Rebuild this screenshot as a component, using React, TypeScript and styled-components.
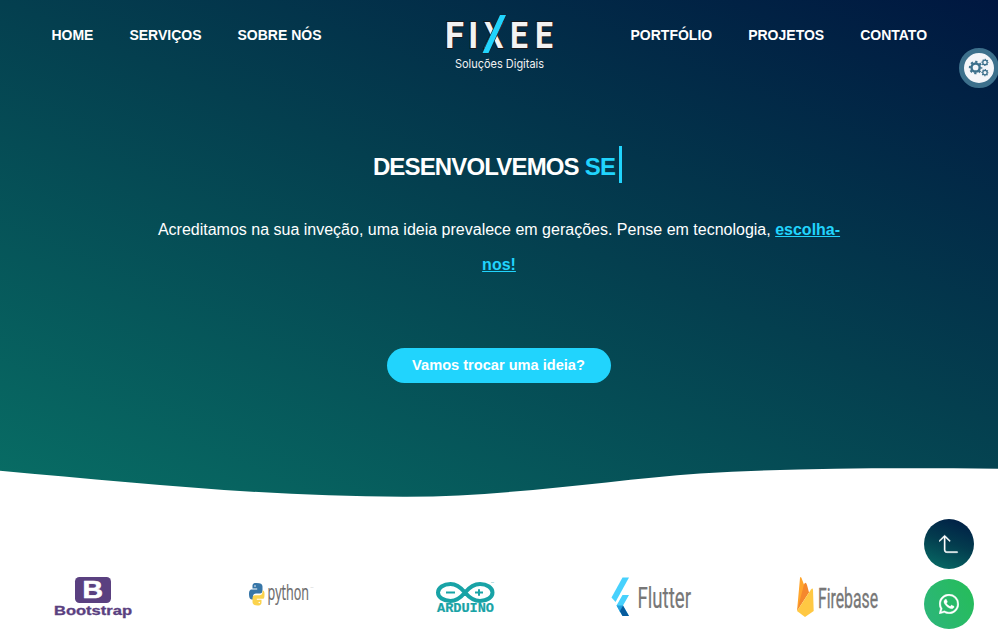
import React from "react";
import styled, { createGlobalStyle } from "styled-components";
import { BsArrow90DegUp, BsWhatsapp } from "react-icons/bs";

const GlobalStyle = createGlobalStyle`
  * { box-sizing: border-box; }
  html, body { margin: 0; background: #fff; overflow: hidden; }
  body { font-family: "Liberation Sans", Arial, sans-serif; }
  a { color: inherit; text-decoration: none; }
`;

const Page = styled.div`
  height: 642px;
  overflow: hidden;
`;

const Hero = styled.section`
  display: flex;
  flex-direction: column;
  align-items: center;
  position: relative;
  height: 498px;
  color: #fff;
  background: linear-gradient(203deg, #001740, #043f4f 46%, #086e65);
`;

const Header = styled.header`
  display: grid;
  grid-template-columns: 396px 1fr 396px;
  align-items: start;
  width: 100%;
  height: 80px;
  padding: 0 0 0 51px;
`;

const Nav = styled.nav<{ $right?: boolean }>`
  display: flex;
  gap: 36px;
  padding-top: 27px;
  padding-left: ${(p) => (p.$right ? "28.5px" : "0.4px")};
  font-size: 14px;
  font-weight: 700;
  line-height: 16px;
  white-space: nowrap;
`;

const Logo = styled.svg`
  display: block;
  width: 120px;
  height: 66px;
  margin: 10px 0 0 -7px;
`;

const Title = styled.h1`
  display: flex;
  gap: 6px;
  height: 37px;
  margin: 66px 0 0 -3px;
  font-size: 24px;
  line-height: 37px;
  letter-spacing: -0.85px;
`;

const TitleText = styled.span`
  padding-top: 2px;
`;

const Typed = styled.span`
  height: 37px;
  padding-top: 2px;
  padding-right: 4px;
  border-right: 3px solid #21d4fd;
  color: #21d4fd;
`;

const Lead = styled.p`
  width: 700px;
  margin: 29px 0 0;
  font-size: 16px;
  line-height: 35px;
  text-align: center;
`;

const Highlight = styled.a`
  && {
    color: #21d4fd;
    font-weight: 700;
    text-decoration: underline;
  }
`;

const CallButton = styled.button`
  width: 224px;
  height: 35px;
  margin: 66px 1px 0 0;
  padding: 0;
  border: 0;
  border-radius: 20px;
  background: #21d4fd;
  color: #fff;
  font: 700 14.6px/35px "Liberation Sans", Arial, sans-serif;
`;

const Wave = styled.svg`
  position: absolute;
  left: 0;
  bottom: 0;
  width: 998px;
  height: 32px;
`;

const Partners = styled.section`
  display: grid;
  grid-template-columns: repeat(5, 186px);
  padding-top: 72px;
`;

const Partner = styled.svg`
  display: block;
  width: 186px;
  height: 60px;
`;

const Floating = styled.aside`
  position: fixed;
  right: 24px;
  bottom: 13px;
  display: grid;
  gap: 10px;
`;

const RoundButton = styled.a<{ $fill: string }>`
  display: grid;
  place-items: center;
  width: 50px;
  height: 50px;
  border-radius: 50%;
  background: ${(p) => p.$fill};
  && { color: #fff; }
  font-size: 20px;

  svg {
    stroke: currentColor;
    stroke-width: 0.3px;
  }
`;

const Settings = styled.button`
  position: fixed;
  top: 48px;
  right: -1px;
  display: grid;
  place-items: center;
  width: 40px;
  height: 40px;
  padding: 0;
  border: 5px solid #3d708c;
  border-radius: 50%;
  background: #f4f5f9;
`;

const Gear = ({ x, y, r }: { x: number; y: number; r: number }) => {
  const tooth = (2 * Math.PI * (r + r * 0.4)) / 16;
  return (
    <g fill="none" stroke="#3d708c">
      <circle cx={x} cy={y} r={r} strokeWidth={r * 0.6} />
      <circle cx={x} cy={y} r={r * 1.4} strokeWidth={r * 0.5} strokeDasharray={`${tooth} ${tooth}`} strokeDashoffset={tooth / 2} />
    </g>
  );
};

const Gears = () => (
  <svg width="30" height="30" viewBox="964 53 30 30">
    <Gear x={975.6} y={67.5} r={4.1} />
    <Gear x={985} y={62.4} r={2.2} />
    <Gear x={985} y={72.6} r={2.2} />
  </svg>
);

const FixeeLogo = () => (
  <Logo viewBox="440 10 120 66">
    <g fill="#f2f2f2" stroke="#17181c" strokeWidth="2" paintOrder="stroke" fontFamily="Roboto" fontWeight="700" fontSize="37.500">
      <text x="445" y="47.500" textLength="19" lengthAdjust="spacingAndGlyphs">F</text>
      <text x="468.200" y="47.500" textLength="10" lengthAdjust="spacingAndGlyphs">I</text>
      <text x="484" y="47.500" textLength="19.500" lengthAdjust="spacingAndGlyphs">X</text>
      <text x="510" y="47.500" textLength="18" lengthAdjust="spacingAndGlyphs">E</text>
      <text x="535" y="47.500" textLength="18" lengthAdjust="spacingAndGlyphs">E</text>
    </g>
    <path d="M500 15h6L488.500 53H482.500Z" fill="#21d4fd" stroke="#10212e" strokeWidth="1.2" paintOrder="stroke" />
    <text x="455" y="68" textLength="89" lengthAdjust="spacingAndGlyphs" fill="#f2f2f2" fontFamily="Inter" fontSize="12">Soluções Digitais</text>
  </Logo>
);

const BootstrapLogo = () => (
  <Partner viewBox="0 570 186 60">
    <rect x="75" y="577" width="36" height="26" rx="4.5" fill="#5a4080" />
    <text x="82.500" y="598.300" textLength="20.500" lengthAdjust="spacingAndGlyphs" fill="#fff" stroke="#fff" strokeWidth=".6" fontFamily="Liberation Sans" fontWeight="700" fontSize="24">B</text>
    <text x="54" y="614.500" textLength="78" lengthAdjust="spacingAndGlyphs" fill="#5a4080" stroke="#5a4080" strokeWidth=".3" fontFamily="Liberation Sans" fontWeight="700" fontSize="12">Bootstrap</text>
  </Partner>
);

const PythonLogo = () => (
  <Partner viewBox="186 570 186 60">
    <path d="M256.500 583c-4 0-4 1.600-4 3.600v2h4.700v1h-5.500c-2.300 0-2.700 2.500-2.700 5s.8 5 2.700 5h1.300v-3c0-2 1.300-3.200 3-3.200h4c1.500 0 2.500-1.300 2.500-3V586.600c0-2.600-2-3.600-6-3.600Z" fill="#3776a8" />
    <path d="M257.500 605.500c4 0 4-1.700 4-3.700v-2h-4.700v-1h6c1.700 0 1.700-2.400 1.700-4.800s-.5-3.600-1.700-3.600H262.500v1.500c0 2-1.300 3.300-3 3.300h-4.500c-1.700 0-2.500 1.300-2.500 3v3.800c0 2.500 2 3.500 5 3.500Z" fill="#fbd34d" />
    <circle cx="255" cy="586" r=".8" fill="#fff" />
    <circle cx="259.300" cy="602.500" r=".8" fill="#fff" />
    <text x="267.500" y="600" textLength="41.500" lengthAdjust="spacingAndGlyphs" fill="#6a6a6a" stroke="#6a6a6a" strokeWidth=".2" fontFamily="Open Sans" fontSize="21">python</text>
    <text x="310.500" y="588" fill="#bbb" fontFamily="Liberation Sans" fontSize="2">TM</text>
  </Partner>
);

const ArduinoLogo = () => (
  <Partner viewBox="372 570 186 60">
    <g fill="none" stroke="#18a3a6">
      <path d="M465 592.500C460 586.500 456 584 450.500 584c-7 0-12.500 3.800-12.500 8.500s5.500 8.500 12.500 8.500c5.500 0 9.500-2.500 14.500-8.500s9.500-8.500 15-8.500c7 0 12.500 3.800 12.500 8.500s-5.500 8.500-12.500 8.500c-5.500 0-10-2.500-15-8.500Z" strokeWidth="4" />
      <path d="M446 592.500h9M475 592.500h8M479 589.200v6.600" strokeWidth="2" />
    </g>
    <text x="437" y="612" textLength="57" lengthAdjust="spacingAndGlyphs" fill="#18a3a6" stroke="#18a3a6" strokeWidth=".2" fontFamily="Liberation Mono" fontWeight="700" fontSize="12">ARDUINO</text>
    <text x="491" y="583" fill="#18a3a6" fontFamily="Liberation Sans" fontSize="2">TM</text>
  </Partner>
);

const FlutterLogo = () => (
  <Partner viewBox="558 570 186 60">
    <path d="M622.500 577.500H629L615.500 602L611.500 597.500Z" fill="#47d1fd" />
    <path d="M622.500 595H629L623 605.500L629 616H622.500L616.500 605.500Z" fill="#47d1fd" />
    <path d="M616.500 605.500L620 612L623 605.500Z" fill="#259fdc" />
    <path d="M623 605.500L629 616H622.500L619.800 611.200Z" fill="#075b9d" />
    <text x="637.500" y="608" textLength="53.500" lengthAdjust="spacingAndGlyphs" fill="#777" stroke="#777" strokeWidth=".2" fontFamily="Roboto" fontSize="29">Flutter</text>
  </Partner>
);

const FirebaseLogo = () => (
  <Partner viewBox="744 570 186 60">
    <path d="M797 611L800 578Q800.500 576 801.500 578L804.500 586L806 589L797 611Z" fill="#ffa52c" />
    <path d="M797 611L804 584.500Q805.500 581 807 585L809 592.500Z" fill="#f5882d" />
    <path d="M797 611L811 589.500Q812.800 587.500 813 590L813.700 611L805 617Z" fill="#ffc843" />
    <text x="818" y="607.500" textLength="60" lengthAdjust="spacingAndGlyphs" fill="#777" stroke="#777" strokeWidth=".35" fontFamily="Roboto" fontSize="27">Firebase</text>
  </Partner>
);

export default function App() {
  return (
    <Page>
      <GlobalStyle />
      <Hero>
        <Header>
          <Nav>
            <a>HOME</a>
            <a>SERVIÇOS</a>
            <a>SOBRE NÓS</a>
          </Nav>
          <FixeeLogo />
          <Nav $right>
            <a>PORTFÓLIO</a>
            <a>PROJETOS</a>
            <a>CONTATO</a>
          </Nav>
        </Header>
        <Title>
          <TitleText>DESENVOLVEMOS</TitleText>
          <Typed>SE</Typed>
        </Title>
        <Lead>
          Acreditamos na sua inveção, uma ideia prevalece em gerações. Pense em tecnologia,{" "}
          <Highlight>escolha-nos!</Highlight>
        </Lead>
        <CallButton>Vamos trocar uma ideia?</CallButton>
        <Wave viewBox="0 466 998 32">
          <path d="M0 470.700C136 483 272 497 407 496.700C510 496.500 610 480 700 473.500C800 467.500 900 468 998 468.700V498H0Z" fill="#fff" />
        </Wave>
      </Hero>
      <Partners>
        <BootstrapLogo />
        <PythonLogo />
        <ArduinoLogo />
        <FlutterLogo />
        <FirebaseLogo />
      </Partners>
      <Settings aria-label="Configurações">
        <Gears />
      </Settings>
      <Floating>
        <RoundButton $fill="linear-gradient(200deg, #001a44, #033c4e 48%, #087067)">
          <BsArrow90DegUp />
        </RoundButton>
        <RoundButton $fill="linear-gradient(245deg, #25bd58, #2db57c)">
          <BsWhatsapp />
        </RoundButton>
      </Floating>
    </Page>
  );
}
